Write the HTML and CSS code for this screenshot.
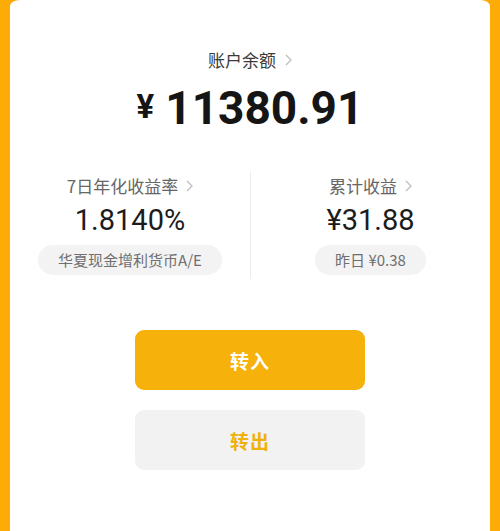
FILE: index.html
```html
<!DOCTYPE html>
<html lang="zh-CN">
<head>
<meta charset="utf-8">
<link rel="stylesheet" href="styles.css">
</head>
<body>
<main class="card">
  <section class="balance">
    <div class="balance-title">账户余额<svg class="chev" viewBox="0 0 7 12" width="7" height="12"><polyline points="1,1 6,6 1,11" fill="none" stroke="#bdbdbd" stroke-width="1.3"/></svg></div>
    <div class="balance-amount"><span class="yen">¥</span><span class="amount">11380.91</span></div>
  </section>
  <section class="stats">
    <div class="stat">
      <div class="stat-label">7日年化收益率<svg class="chev" viewBox="0 0 7 12" width="7" height="12"><polyline points="1,1 6,6 1,11" fill="none" stroke="#bdbdbd" stroke-width="1.3"/></svg></div>
      <div class="stat-value">1.8140%</div>
      <div class="pill">华夏现金增利货币A/E</div>
    </div>
    <div class="stat stat-right">
      <div class="stat-label">累计收益<svg class="chev" viewBox="0 0 7 12" width="7" height="12"><polyline points="1,1 6,6 1,11" fill="none" stroke="#bdbdbd" stroke-width="1.3"/></svg></div>
      <div class="stat-value">¥31.88</div>
      <div class="pill">昨日 ¥0.38</div>
    </div>
  </section>
  <section class="actions">
    <button class="btn btn-in">转入</button>
    <button class="btn btn-out">转出</button>
  </section>
</main>
</body>
</html>
```
FILE: styles.css
```css
html, body {
  margin: 0;
  padding: 0;
}
body {
  background: #fdab06;
  height: 531px;
  overflow: hidden;
  font-family: "Noto Sans CJK SC", "Noto Sans", sans-serif;
}
.card {
  margin: 0 10px;
  height: 531px;
  background: #ffffff;
  border-radius: 10px 10px 0 0 / 6px 6px 0 0;
  display: flex;
  flex-direction: column;
  align-items: center;
}
.balance {
  padding-top: 47px;
  display: flex;
  flex-direction: column;
  align-items: center;
}
.balance-title {
  display: flex;
  align-items: center;
  gap: 9px;
  font-size: 17px;
  line-height: 26px;
  color: #3a3a3a;
}
.chev {
  display: block;
}
.balance-amount {
  margin-top: 8px;
  display: flex;
  align-items: center;
  gap: 11px;
  color: #151515;
  font-family: Roboto, "Liberation Sans", sans-serif;
  font-weight: 700;
  height: 54px;
}
.yen {
  font-size: 33px;
  line-height: 1;
  margin-top: -4px;
}
.amount {
  font-size: 46px;
  line-height: 1;
}
.stats {
  margin-top: 36px;
  align-self: stretch;
  display: grid;
  grid-template-columns: 1fr 1fr;
}
.stat {
  display: flex;
  flex-direction: column;
  align-items: center;
  padding-bottom: 4px;
}
.stat-right {
  border-left: 1px solid #ececec;
}
.stat-label {
  display: flex;
  align-items: center;
  gap: 8px;
  font-size: 17px;
  line-height: 24px;
  margin-top: 3px;
  color: #666666;
}
.stat-value {
  margin-top: 5px;
  font-family: Roboto, "Liberation Sans", sans-serif;
  font-size: 29px;
  line-height: 34px;
  color: #1c1c1c;
}
.pill {
  margin-top: 8px;
  height: 30px;
  line-height: 30px;
  padding: 0 20px;
  border-radius: 15px;
  background: #f3f3f3;
  color: #6f6f6f;
  font-size: 15px;
}
.actions {
  margin-top: 51px;
  display: flex;
  flex-direction: column;
  gap: 20px;
}
.btn {
  width: 230px;
  height: 60px;
  border: none;
  border-radius: 9px;
  font-family: "Noto Sans CJK SC", sans-serif;
  font-size: 19px;
  font-weight: 700;
  letter-spacing: 1px;
}
.btn-in {
  background: #f6b10b;
  color: #ffffff;
}
.btn-out {
  background: #f2f2f2;
  color: #eeb10d;
}
```
